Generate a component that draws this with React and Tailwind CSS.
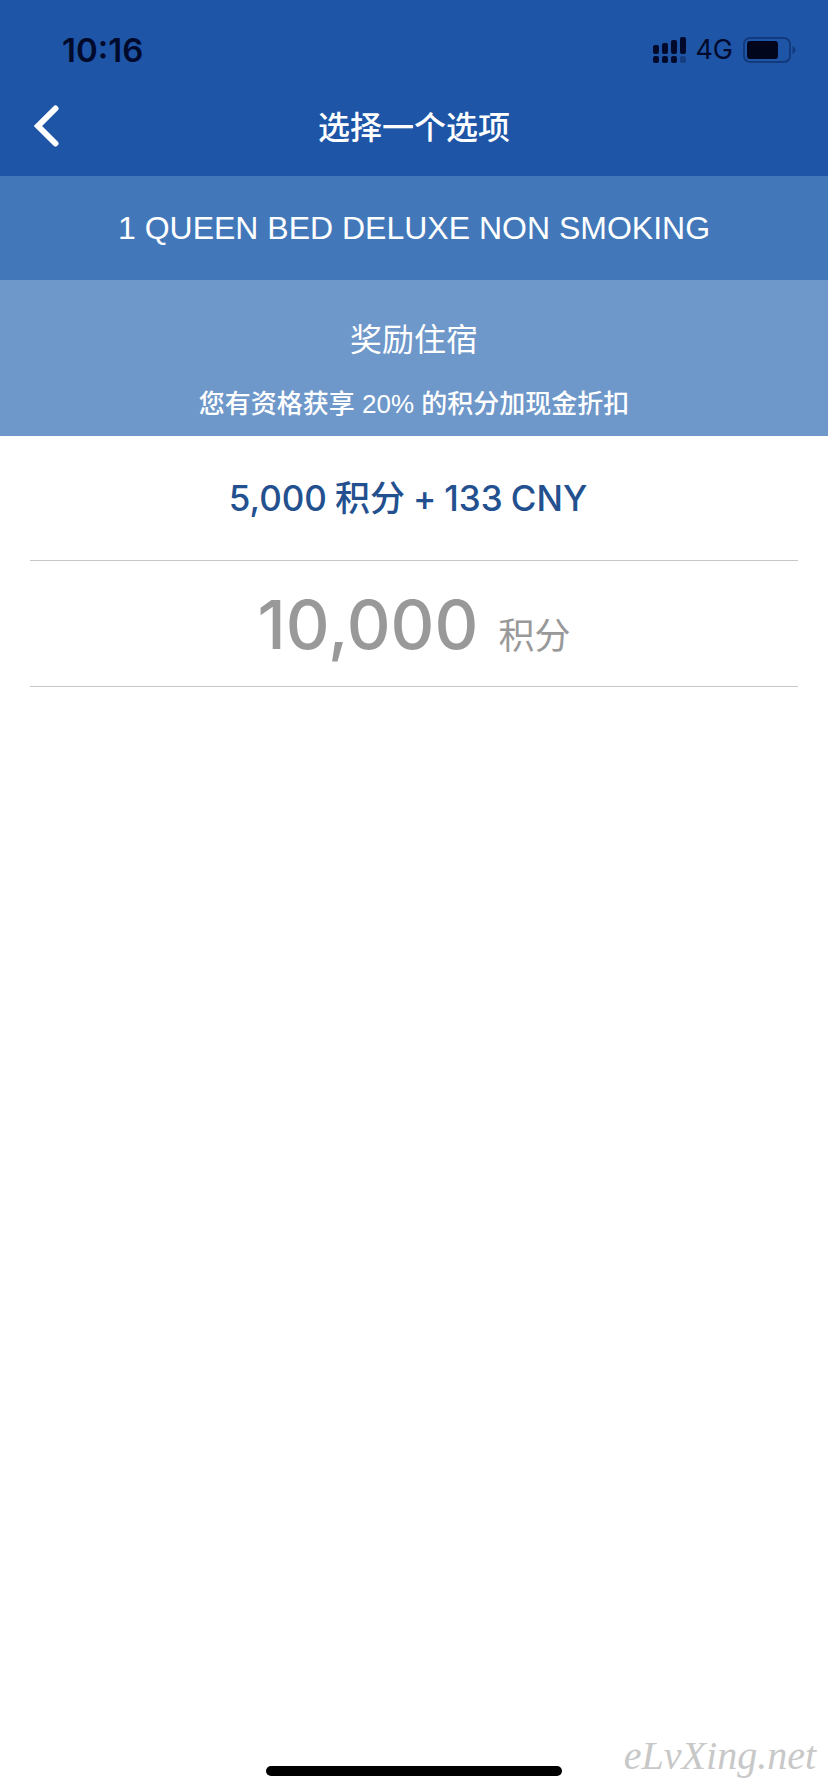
const LATIN = "font-['Inter','Noto_Sans_CJK_SC',sans-serif]";

function SignalIcon() {
  return (
    <svg width="34" height="28" viewBox="0 0 34 28" className="text-[#020a2c]" fill="currentColor" aria-hidden="true">
      <rect x="0" y="9" width="6" height="9" rx="2" />
      <rect x="9" y="7" width="6" height="11" rx="2" />
      <rect x="18" y="4" width="6" height="14" rx="2" />
      <rect x="27" y="1" width="6" height="17" rx="2" />
      <rect x="0" y="20" width="6" height="7" rx="2" />
      <rect x="9" y="20" width="6" height="7" rx="2" />
      <rect x="18" y="20" width="6" height="7" rx="2" />
      <rect x="27" y="20" width="6" height="7" rx="2" opacity="0.3" />
    </svg>
  );
}

function BatteryIcon() {
  return (
    <svg width="53" height="26" viewBox="0 0 53 26" aria-hidden="true">
      <rect x="1" y="1" width="46" height="24" rx="6" fill="none" stroke="#123a7c" strokeWidth="2" />
      <rect x="4" y="4" width="31" height="18" rx="3" fill="#02061c" />
      <path d="M49.5 9c2 .8 3 2.300 3 4s-1 3.200-3 4z" fill="#123a7c" />
    </svg>
  );
}

function StatusBar() {
  return (
    <div className="flex items-center justify-between h-[76px] pt-6 pl-[62px] pr-8 text-[#020a2c]">
      <span className="text-[33px] leading-8 font-semibold">10:16</span>
      <div className="flex items-center">
        <SignalIcon />
        <span className="ml-2 mr-[10px] text-[27px] leading-8">4G</span>
        <BatteryIcon />
      </div>
    </div>
  );
}

function Header() {
  return (
    <header className="bg-[#1e55a7]">
      <StatusBar />
      <div className="grid grid-cols-[80px_1fr_80px] items-center h-[100px]">
        <button type="button" aria-label="返回" className="flex items-center h-20 pl-8">
          <svg width="28" height="42" viewBox="0 0 28 42" fill="none" stroke="#fff" strokeWidth="6" aria-hidden="true">
            <path d="M23.500 3.500L6 21l17.500 17.500" strokeLinecap="round" />
          </svg>
        </button>
        <h1 className="pt-1 text-center text-[32px] leading-10 font-medium text-white">选择一个选项</h1>
      </div>
    </header>
  );
}

function App() {
  return (
    <div className={`${LATIN} relative flex flex-col min-h-screen bg-white`}>
      <Header />

      <h2 className="flex items-center justify-center h-[104px] bg-[#4278b9] text-white text-[32px] leading-10 font-['Liberation_Sans',sans-serif]">
        1 QUEEN BED DELUXE NON SMOKING
      </h2>

      <div className="bg-[#6e97ca] pt-10 pb-3 text-center text-white">
        <h3 className="text-[32px] leading-10 font-normal">奖励住宿</h3>
        <p className="mt-6 text-[26px] leading-10 font-medium font-['Liberation_Sans','Noto_Sans_CJK_SC',sans-serif]">
          您有资格获享 20% 的积分加现金折扣
        </p>
      </div>

      <main className="flex-1 px-[30px]">
        <button
          type="button"
          className="flex items-center justify-center gap-2 w-full h-[125px] pr-3 border-b border-[#c8c8c8] text-[35px] leading-10 font-medium text-[#23508f]"
        >
          <span>5,000</span>
          <span>积分</span>
          <span>+</span>
          <span>133</span>
          <span>CNY</span>
        </button>
        <button
          type="button"
          className="flex items-baseline justify-center gap-5 w-full h-[126px] border-b border-[#c8c8c8] text-[#999]"
        >
          <span className="text-[68px] leading-[126px] font-medium">10,000</span>
          <span className="text-[36px]">积分</span>
        </button>
      </main>

      <footer className="flex justify-center pb-4">
        <div className="w-[296px] h-[10px] rounded-full bg-black" />
      </footer>

      <span className="absolute right-3 bottom-4 text-[40px] leading-10 italic text-[#c8c8c8] font-['Liberation_Serif',cursive]">
        eLvXing.net
      </span>
    </div>
  );
}

export default App;
